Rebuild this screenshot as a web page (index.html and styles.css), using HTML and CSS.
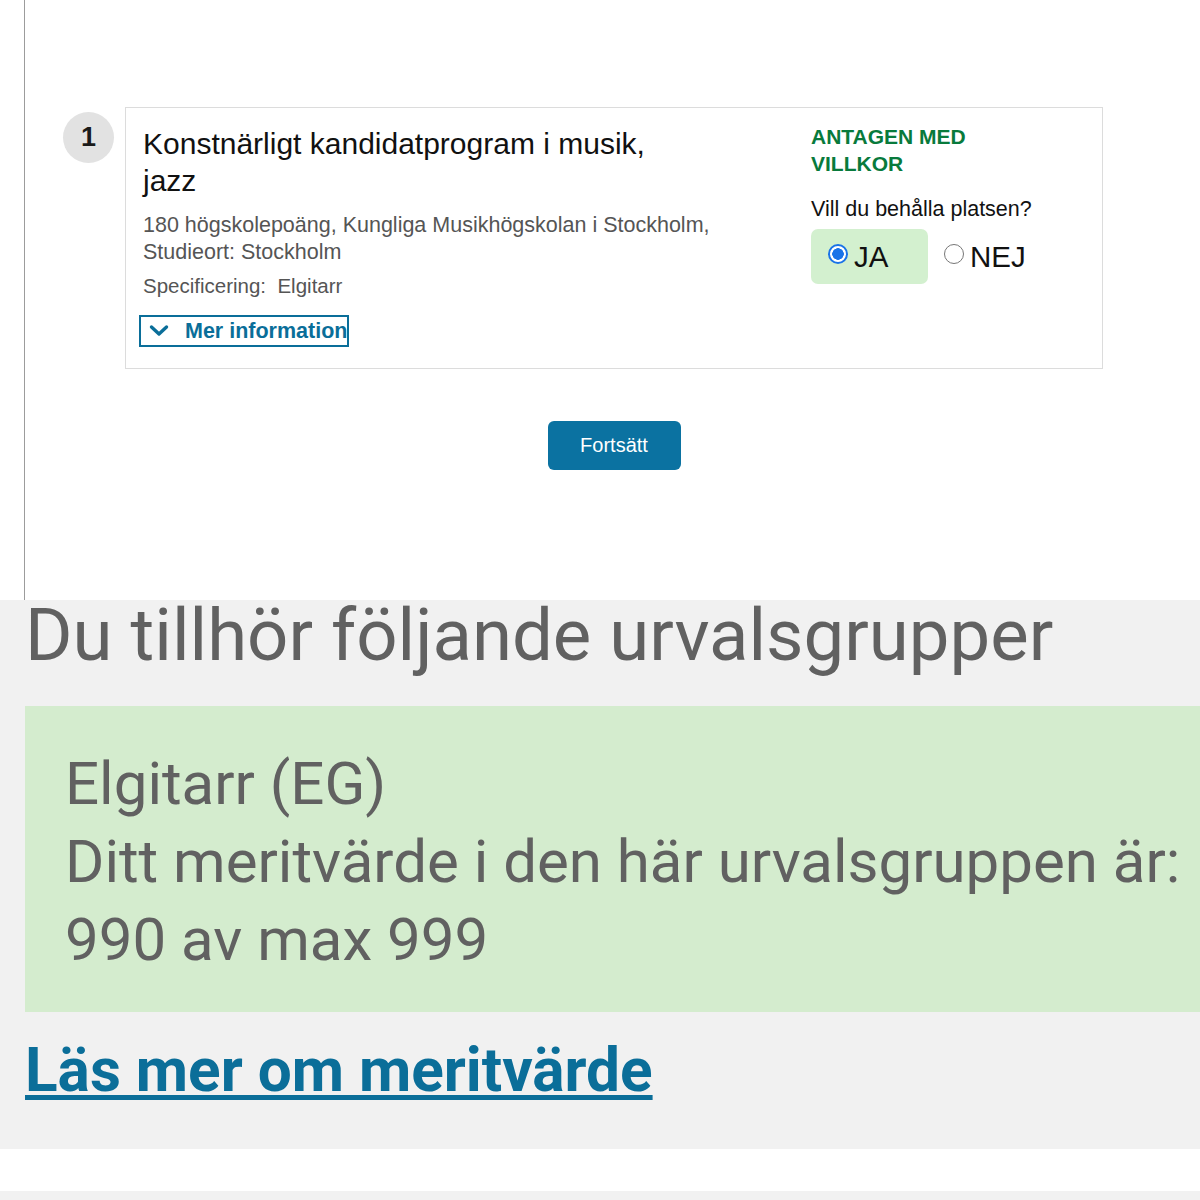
FILE: index.html
```html
<!DOCTYPE html>
<html lang="sv">
<head>
<meta charset="utf-8">
<title>Antagning</title>
<link rel="stylesheet" href="styles.css">
</head>
<body>
<section class="top">
  <div class="offer-grid">
    <div class="num">1</div>
    <div class="card">
      <div class="info">
        <h2 class="title">Konstnärligt kandidatprogram i musik, jazz</h2>
        <p class="sub">180 högskolepoäng, Kungliga Musikhögskolan i Stockholm,<br>Studieort: Stockholm</p>
        <p class="spec">Specificering:&nbsp; Elgitarr</p>
        <button class="more" type="button">
          <svg class="chev" width="20" height="14" viewBox="0 0 20 14"><path d="M2.5 3 L10 10 L17.5 3" fill="none" stroke="#0a6e99" stroke-width="3.4" stroke-linecap="round" stroke-linejoin="round"/></svg>
          <span>Mer information</span>
        </button>
      </div>
      <div class="answer">
        <div class="status">ANTAGEN MED VILLKOR</div>
        <div class="question">Vill du behålla platsen?</div>
        <div class="choices">
          <label class="choice selected"><span class="radio on"></span><span>JA</span></label>
          <label class="choice"><span class="radio"></span><span>NEJ</span></label>
        </div>
      </div>
    </div>
    <div class="actions">
      <button class="continue" type="button">Fortsätt</button>
    </div>
  </div>
</section>
<section class="groups">
  <h2 class="groups-title">Du tillhör följande urvalsgrupper</h2>
  <div class="group-box">
    <div>Elgitarr (EG)</div>
    <div>Ditt meritvärde i den här urvalsgruppen är:</div>
    <div>990 av max 999</div>
  </div>
  <a class="read-more" href="#">Läs mer om meritvärde</a>
</section>
<div class="gap"></div>
<section class="footer-strip"></section>
</body>
</html>
```
FILE: styles.css
```css
html, body {
  margin: 0;
  padding: 0;
  overflow: hidden;
  background: #ffffff;
}

body {
  width: 1200px;
  font-family: "Liberation Sans", Arial, sans-serif;
}

.top {
  height: 600px;
  box-sizing: border-box;
  margin-left: 24px;
  border-left: 1px solid #9c9c9c;
  padding-top: 107px;
  padding-left: 38px;
  background: #fff;
}

.offer-grid {
  display: grid;
  grid-template-columns: 51px 978px;
  column-gap: 11px;
}

.num {
  width: 51px;
  height: 51px;
  margin-top: 5px;
  border-radius: 50%;
  background: #e2e2e2;
  color: #1a1a1a;
  font-weight: bold;
  font-size: 27px;
  display: flex;
  align-items: center;
  justify-content: center;
}

.card {
  border: 1px solid #dcdcdc;
  padding: 17px 17px 21px 17px;
  display: grid;
  grid-template-columns: 1fr 274px;
}

.title {
  margin: 0;
  max-width: 540px;
  font-size: 30px;
  line-height: 37px;
  font-weight: normal;
  color: #111;
}

.sub {
  margin: 13px 0 0;
  font-size: 21.5px;
  line-height: 27px;
  color: #555;
}

.spec {
  margin: 6px 0 0;
  font-size: 20.5px;
  line-height: 27px;
  color: #555;
}

.more {
  margin: 16px 0 0 -4px;
  height: 32px;
  box-sizing: border-box;
  border: 2px solid #0a6e99;
  background: #fff;
  padding: 0 0 0 8px;
  display: flex;
  align-items: center;
  gap: 16px;
  font-family: "Liberation Sans", Arial, sans-serif;
  font-weight: bold;
  font-size: 21.5px;
  color: #0a6e99;
}

.chev {
  display: block;
}

.answer {
  margin-top: -2px;
}

.status {
  max-width: 200px;
  font-size: 21px;
  line-height: 27px;
  font-weight: bold;
  color: #087a3c;
}

.question {
  margin-top: 19px;
  font-size: 21.5px;
  line-height: 27px;
  color: #111;
}

.choices {
  margin-top: 6px;
  display: flex;
  gap: 16px;
}

.choice {
  height: 55px;
  box-sizing: border-box;
  display: flex;
  align-items: center;
  gap: 6px;
  font-size: 29.5px;
  color: #111;
}

.choice.selected {
  width: 117px;
  padding-left: 17px;
  background: #d3f0cf;
  border-radius: 7px;
}

.radio {
  width: 20px;
  height: 20px;
  box-sizing: border-box;
  border-radius: 50%;
  border: 1px solid #777;
  background: #fff;
  margin-top: -5px;
}

.radio.on {
  border: 2px solid #1a73e8;
  background: radial-gradient(circle, #1a73e8 0 5.5px, #fff 6px);
}

.actions {
  grid-column: 2;
  display: flex;
  justify-content: center;
  margin-top: 52px;
}

.continue {
  width: 133px;
  height: 49px;
  border: none;
  border-radius: 6px;
  background: #0b72a1;
  color: #fff;
  font-family: "Liberation Sans", Arial, sans-serif;
  font-size: 20px;
}

.groups {
  background: #f1f1f1;
  padding: 0 0 40px 25px;
  height: 549px;
  box-sizing: border-box;
  font-family: Roboto, "Noto Sans", sans-serif;
}

.groups-title {
  margin: 0;
  font-size: 72.5px;
  line-height: 72px;
  font-weight: normal;
  color: #616161;
}

.group-box {
  margin-top: 34px;
  width: 1240px;
  box-sizing: border-box;
  padding: 39px 40px 33px;
  background: #d4ecce;
  font-size: 60px;
  line-height: 78px;
  color: #616161;
}

.read-more {
  display: inline-block;
  margin-top: 20px;
  font-size: 60.3px;
  line-height: 78px;
  font-weight: bold;
  color: #0b6e99;
  text-decoration: underline;
  text-decoration-thickness: 5px;
  text-underline-offset: 4px;
}

.gap {
  height: 42px;
  background: #fff;
}

.footer-strip {
  height: 40px;
  background: #f1f1f1;
}
```
